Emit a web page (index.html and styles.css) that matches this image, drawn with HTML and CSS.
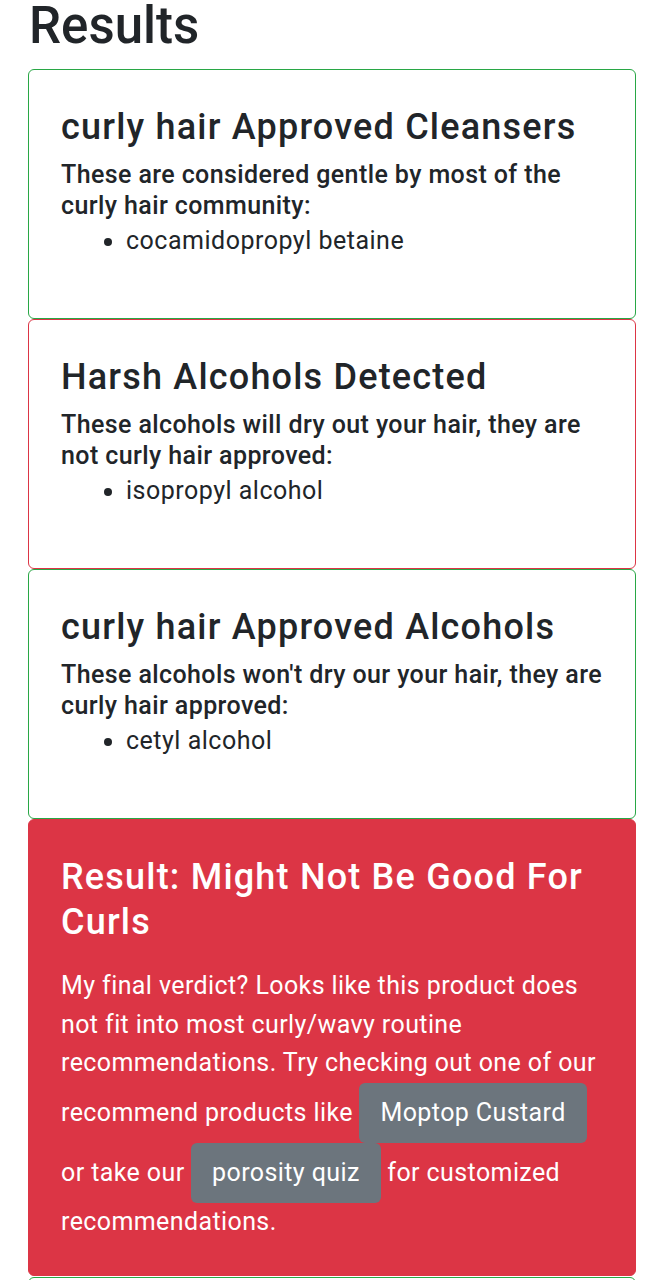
FILE: index.html
```html
<!DOCTYPE html>
<html lang="en">
<head>
  <meta charset="UTF-8">
  <title>Results</title>
  <link rel="stylesheet" href="styles.css">
</head>
<body>
  <div class="wrapper">
    <h1 class="page-title">Results</h1>

    <div class="card card-good">
      <h3 class="card-title">curly hair Approved Cleansers</h3>
      <h5 class="card-sub">These are considered gentle by most of the curly hair community:</h5>
      <ul class="card-list">
        <li>cocamidopropyl betaine</li>
      </ul>
    </div>

    <div class="card card-bad">
      <h3 class="card-title">Harsh Alcohols Detected</h3>
      <h5 class="card-sub">These alcohols will dry out your hair, they are not curly hair approved:</h5>
      <ul class="card-list">
        <li>isopropyl alcohol</li>
      </ul>
    </div>

    <div class="card card-good">
      <h3 class="card-title">curly hair Approved Alcohols</h3>
      <h5 class="card-sub">These alcohols won't dry our your hair, they are curly hair approved:</h5>
      <ul class="card-list">
        <li>cetyl alcohol</li>
      </ul>
    </div>

    <div class="card card-verdict">
      <h3 class="card-title">Result: Might Not Be Good For Curls</h3>
      <p class="verdict-text">My final verdict? Looks like this product does not fit into most curly/wavy routine recommendations. Try checking out one of our recommend products like <a class="btn" href="#">Moptop Custard</a> or take our <a class="btn" href="#">porosity quiz</a> for customized recommendations.</p>
    </div>

    <div class="card card-good">
      <h3 class="card-title">curly hair Approved Ingredients</h3>
    </div>
  </div>
</body>
</html>
```

FILE: styles.css
```css
* {
  box-sizing: border-box;
}
body {
  margin: 0;
  font-family: Roboto, "Noto Sans", sans-serif;
  color: #212529;
  background: #fff;
}
.wrapper {
  padding: 0 27px 0 28px;
}
.page-title {
  margin: 0 0 18px 1px;
  font-size: 51px;
  font-weight: 500;
  line-height: 1;
}
.card {
  border: 1px solid #dee2e6;
  border-radius: 6px;
  padding: 35px 28px 34px 32px;
  background: #fff;
}
.card-good {
  border-color: #28a745;
}
.card-bad {
  border-color: #dc3545;
}
.card-verdict {
  background: #dc3545;
  border-color: #dc3545;
  color: #fff;
  margin-bottom: 1px;
}
.card-title {
  margin: 0 0 9px;
  font-size: 36px;
  font-weight: 500;
  line-height: 45px;
  letter-spacing: 1.2px;
}
.card-sub {
  margin: 0;
  font-size: 25px;
  font-weight: 500;
  line-height: 31px;
  letter-spacing: 0.4px;
}
.card-list {
  margin: 0 0 23px;
  padding-left: 65px;
  font-size: 25px;
  line-height: 40px;
  letter-spacing: 0.5px;
}
.card-verdict .card-title {
  margin-bottom: 22px;
}
.verdict-text {
  margin: 0;
  font-size: 25px;
  line-height: 38.5px;
  letter-spacing: 0.4px;
}
.btn {
  display: inline-block;
  padding: 12px 21px;
  background: #6c757d;
  color: #fff;
  text-decoration: none;
  border-radius: 6px;
  line-height: 36px;
}
```
